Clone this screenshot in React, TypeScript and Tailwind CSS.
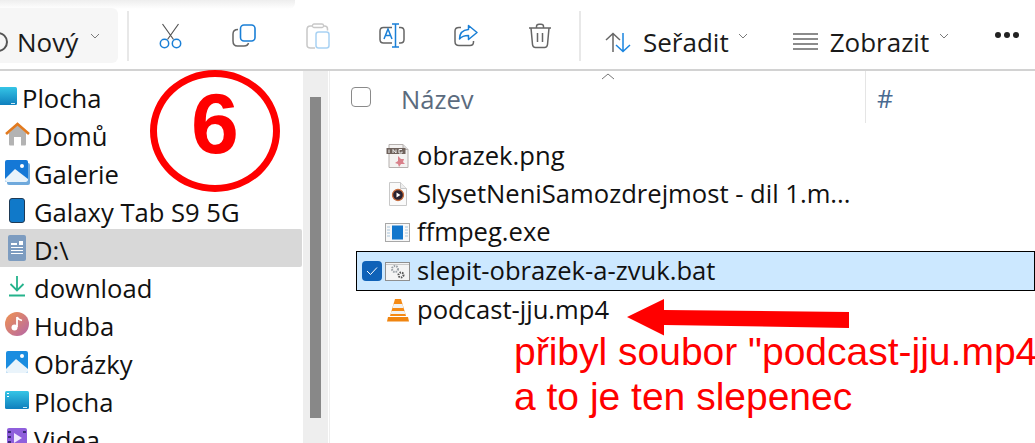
import React from "react";

const ui = { fontFamily: '"Open Sans", "Noto Sans", sans-serif' };

function Chevron({ className = "" }: { className?: string }) {
  return (
    <svg width="10" height="6" viewBox="0 0 10 6" className={className}>
      <path d="M1 1l4 4 4-4" fill="none" stroke="#7a7a7a" strokeWidth="1" />
    </svg>
  );
}

function Scissors() {
  return (
    <svg width="23" height="26" viewBox="0 0 23 26">
      <path d="M3.500 1l11 15.500M19.500 1l-11 15.500" stroke="#555" strokeWidth="1.200" fill="none" />
      <circle cx="5.500" cy="20.500" r="4.200" fill="none" stroke="#1a7fd6" strokeWidth="1.500" />
      <circle cx="17.500" cy="20.500" r="4.200" fill="none" stroke="#1a7fd6" strokeWidth="1.500" />
    </svg>
  );
}
function Copy() {
  return (
    <svg width="24" height="23" viewBox="0 0 24 23">
      <path d="M6 5.500C2.500 5.500 1 7 1 10v7c0 3 1.500 5 4.500 5H12c2.500 0 4-1 4.500-3" fill="none" stroke="#666" strokeWidth="1.500" />
      <rect x="8.500" y="1" width="14.500" height="16" rx="3.500" fill="#fff" stroke="#1a7fd6" strokeWidth="1.600" />
    </svg>
  );
}
function Paste() {
  return (
    <svg width="24" height="26" viewBox="0 0 24 26">
      <path d="M7 3H4.500C2.500 3 1 4.500 1 6.500V22c0 2 1.500 3 3.500 3H9M17 3h1.500c2 0 3 1.500 3 3v1.500" fill="none" stroke="#c8c8c8" strokeWidth="1.500" />
      <rect x="6.500" y="1" width="11" height="3.500" rx="1.500" fill="#fff" stroke="#c8c8c8" strokeWidth="1.300" />
      <rect x="10" y="9" width="13" height="16" rx="2.500" fill="#fff" stroke="#a9d2f3" strokeWidth="1.500" />
    </svg>
  );
}
function Rename() {
  return (
    <svg width="26" height="25" viewBox="0 0 26 25">
      <path d="M13 4.500H4.500C2.500 4.500 1 6 1 8v8.500c0 2 1.500 3.500 3.500 3.500H13M20 4.500h1.500c2 0 3.500 1.500 3.500 3.500v8.500c0 2-1.500 3.500-3.500 3.500H20" fill="none" stroke="#666" strokeWidth="1.500" />
      <path d="M13 1h7M16.500 1v23M13 24h7" fill="none" stroke="#1a7fd6" strokeWidth="1.500" />
      <path d="M5 16l4-10 4 10M6.500 12.500h5" fill="none" stroke="#1a7fd6" strokeWidth="1.500" />
    </svg>
  );
}
function Share() {
  return (
    <svg width="24" height="23" viewBox="0 0 24 23">
      <path d="M7 3.500H5C2.500 3.500 1 5 1 7v10.500c0 2.500 1.500 4 4 4h11c2.500 0 3.500-1.500 3.500-3.500v-1" fill="none" stroke="#666" strokeWidth="1.500" />
      <path d="M14.500 1.500L23 8.500l-8.500 7v-4c-4 0-7 1-9 3.500 0-5.500 3-9 9-9.500z" fill="#fff" stroke="#1a7fd6" strokeWidth="1.500" strokeLinejoin="round" />
    </svg>
  );
}
function Trash() {
  return (
    <svg width="24" height="26" viewBox="0 0 24 26">
      <path d="M1 5h22M8.500 5V3.500C8.500 2 9.500 1.300 11 1.300h2c1.500 0 2.500.7 2.500 2.200V5M3 5l1.500 16.500c.2 2 1.500 3 3 3h9c1.500 0 2.800-1 3-3L21 5M9.500 10v9M14.500 10v9" fill="none" stroke="#666" strokeWidth="1.500" />
    </svg>
  );
}
function Sort() {
  return (
    <svg width="26" height="21" viewBox="0 0 26 21">
      <path d="M8 20V1.500M1 8L8 1.500 15 8" fill="none" stroke="#666" strokeWidth="1.500" />
      <path d="M18 1v18.500M11 13l7 6.500 7-6.500" fill="none" stroke="#1a85e0" strokeWidth="1.500" />
    </svg>
  );
}
function Lines() {
  return (
    <svg width="25" height="17" viewBox="0 0 25 17">
      <path d="M0 1h25M0 6h25M0 11h25M0 16h25" stroke="#666" strokeWidth="1.300" />
    </svg>
  );
}

function SideIcon({ name }: { name: string }) {
  if (name === "home")
    return (
      <svg width="25" height="24" viewBox="0 0 25 24">
        <path d="M4 11v11c0 1 .5 1.500 1.500 1.500H9V15h7v8.500h3.500c1 0 1.500-.5 1.500-1.500V11L12.500 3z" fill="#b3b3b3" />
        <path d="M1 12L12.500 2 24 12" fill="none" stroke="#e27a1f" strokeWidth="2.600" />
      </svg>
    );
  if (name === "gallery")
    return (
      <svg width="25" height="25" viewBox="0 0 25 25">
        <rect x="2" y="3" width="23" height="22" rx="2" fill="#6fa9dc" />
        <rect x="0" y="0" width="23" height="22" rx="2" fill="#1578d6" />
        <path d="M0 19L10 9l13 10v1c0 1-1 2-2 2H2c-1 0-2-1-2-2z" fill="#e8f3fb" />
        <circle cx="17" cy="6" r="2" fill="#fff" />
      </svg>
    );
  if (name === "tablet")
    return (
      <svg width="16" height="25" viewBox="0 0 16 25">
        <rect x="0.500" y="0.500" width="15" height="24" rx="2.500" fill="#1079c9" stroke="#1f3a55" />
      </svg>
    );
  if (name === "drive")
    return (
      <svg width="18" height="26" viewBox="0 0 18 26">
        <rect width="18" height="26" rx="2" fill="#7d9cc0" />
        <path d="M3 8h6v2H3zM11 6h4v4h-4zM3 12h12v1H3zM3 15h12v1H3zM3 18h12v1H3z" fill="#fff" />
      </svg>
    );
  if (name === "download")
    return (
      <svg width="18" height="21" viewBox="0 0 18 21">
        <path d="M9 0v14M2.500 8L9 14.500 15.500 8M1 19.500h16" fill="none" stroke="#25b38c" strokeWidth="1.800" />
      </svg>
    );
  if (name === "music")
    return (
      <svg width="24" height="24" viewBox="0 0 24 24">
        <defs>
          <linearGradient id="mg" x1="0" y1="0" x2="1" y2="1">
            <stop offset="0" stopColor="#f09350" />
            <stop offset="1" stopColor="#b466a8" />
          </linearGradient>
        </defs>
        <circle cx="12" cy="12" r="12" fill="url(#mg)" />
        <path d="M12 5v10M12 5c1 2.500 3 3 5 3.500" fill="none" stroke="#fff" strokeWidth="1.800" />
        <circle cx="9.500" cy="15.500" r="3" fill="#fff" />
      </svg>
    );
  if (name === "pictures")
    return (
      <svg width="22" height="22" viewBox="0 0 22 22">
        <rect width="22" height="22" rx="2" fill="#1b8de0" />
        <path d="M0 18L10 8l12 10v2c0 1-1 2-2 2H2c-1 0-2-1-2-2z" fill="#eaf4fb" />
        <circle cx="16" cy="5" r="2" fill="#fff" />
      </svg>
    );
  if (name === "desktop")
    return (
      <svg width="24" height="18" viewBox="0 0 24 18">
        <defs>
          <linearGradient id="dg" x1="0" y1="0" x2="0" y2="1">
            <stop offset="0" stopColor="#35c5e6" />
            <stop offset="1" stopColor="#0f7fbd" />
          </linearGradient>
        </defs>
        <rect width="24" height="18" rx="1.500" fill="url(#dg)" />
        <path d="M2 2h2v1H2zM2 5h2v1H2z" fill="#fff" />
        <path d="M18 16h4v1h-4z" fill="#cdeaf5" />
      </svg>
    );
  return (
    <svg width="20" height="20" viewBox="0 0 20 20">
      <rect width="20" height="20" rx="2" fill="#8f5fdc" />
      <path d="M7 5l8 5-8 5z" fill="#f0e6ff" />
      <path d="M1 3h3v2H1zM1 8h3v2H1zM1 13h3v2H1zM16 3h3v2h-3z" fill="#3c2a78" />
    </svg>
  );
}

function SideRow({ icon, label, active, scrolled }: { icon: string; label: string; active?: boolean; scrolled?: boolean }) {
  return (
    <div className={`flex items-center h-[38px] w-[302px] rounded-r-[2px] ${active ? "bg-[#d8d8d8]" : ""}`}>
      <div className={`w-[34px] shrink-0 flex items-center justify-center ${scrolled ? "-ml-[12px]" : ""}`}>
        <SideIcon name={icon} />
      </div>
      <span className="mt-[6px] text-[25.6px] leading-none text-[#111]">{label}</span>
    </div>
  );
}

function FileIcon({ name }: { name: string }) {
  if (name === "png")
    return (
      <svg width="24" height="24" viewBox="0 0 24 24">
        <path d="M3 .5h14l5 5v18H3z" fill="#f4f2f1" stroke="#b5b0ae" />
        <path d="M17 .5v5h5" fill="#ddd" stroke="#b5b0ae" />
        <rect x="0.500" y="4" width="19" height="6" fill="#6f625c" />
        <path d="M3 9V5.500M7 9V5.500l3 3.500V5.500M16 5.500h-3v3.500h3V7.500" fill="none" stroke="#eee" strokeWidth="1" />
        <path d="M12 12l3 3 3 0-1 3 2 2-4 0-2 3-1-3-3-1 3-2z" fill="#d9808a" />
      </svg>
    );
  if (name === "video")
    return (
      <svg width="18" height="24" viewBox="0 0 18 24">
        <path d="M.5.500h11l6 6v17H.5z" fill="#fafafa" stroke="#c8c8c8" />
        <path d="M11.500.500v6h6" fill="#eee" stroke="#c8c8c8" />
        <circle cx="9" cy="13" r="5.500" fill="#2a2230" stroke="#c96d3d" strokeWidth="1.300" />
        <path d="M7.500 10.500l4 2.500-4 2.500z" fill="#fff" />
      </svg>
    );
  if (name === "exe")
    return (
      <svg width="25" height="19" viewBox="0 0 25 19">
        <rect x="0.500" y="0.500" width="24" height="18" fill="#f8f8f8" stroke="#a8a8a8" />
        <rect x="7" y="2.500" width="11" height="14" fill="#1276cc" />
        <path d="M2 4h3M2 7h3M2 10h3M2 13h3M20 4h3M20 7h3M20 10h3M20 13h3" stroke="#a8c4da" />
      </svg>
    );
  if (name === "bat")
    return (
      <svg width="25" height="19" viewBox="0 0 25 19">
        <rect x="0.500" y="0.500" width="24" height="18" fill="#f4f4f4" stroke="#8f8f8f" />
        <path d="M1 2.500h23" stroke="#c8c8c8" />
        <circle cx="10" cy="7" r="3" fill="none" stroke="#9aa0a6" strokeWidth="2" strokeDasharray="1.500 1" />
        <circle cx="16" cy="13" r="2.500" fill="none" stroke="#555" strokeWidth="2" strokeDasharray="1.500 1" />
      </svg>
    );
  return (
    <svg width="22" height="24" viewBox="0 0 22 24">
      <path d="M8 1h6l5 17H3z" fill="#f58a14" />
      <path d="M6.600 6h8.800l1 4H5.600zM4.600 13h12.800l1 3H3.600z" fill="#f2f2f2" />
      <path d="M1 19h20l1 4.500H0z" fill="#f08510" />
    </svg>
  );
}

function FileRow({ icon, label, selected }: { icon: string; label: string; selected?: boolean }) {
  return (
    <div
      className={`flex items-center ${
        selected ? "h-[40px] border border-black bg-[#cce8ff]" : "h-[38px] border border-transparent"
      }`}
    >
      <div className="w-[27px] ml-[1px] shrink-0 flex items-center justify-center">
        {selected && (
          <span className="flex items-center justify-center w-[20px] h-[20px] rounded-[4px] bg-[#0f62b8]">
            <svg width="12" height="10" viewBox="0 0 12 10">
              <path d="M1 5l3.500 3.500L11 1.500" fill="none" stroke="#fff" strokeWidth="1" />
            </svg>
          </span>
        )}
      </div>
      <div className="w-[25px] shrink-0 flex items-center justify-center">
        <FileIcon name={icon} />
      </div>
      <span className="ml-[7px] text-[25.6px] leading-none text-[#111] whitespace-nowrap">{label}</span>
    </div>
  );
}

export default function App() {
  return (
    <div className="relative w-[1035px] h-[443px] overflow-hidden bg-white flex flex-col" style={ui}>
      <div className="absolute left-0 top-0 w-[295px] h-[9px] bg-gradient-to-b from-[#eeeeee] to-white rounded-br-[6px]" />

      {/* Toolbar */}
      <div className="relative h-[71px] shrink-0 border-b-2 border-[#d2d2d2] flex items-center">
        <div className="mt-[2px] w-[118px] h-[55px] shrink-0 bg-[#f6f6f6] rounded-r-[6px] flex items-center overflow-hidden">
          <span className="-ml-[12px] mt-[12px] w-[20px] h-[20px] rounded-full border-2 border-[#555] shrink-0" />
          <span className="ml-[9px] mt-[12px] text-[26px] leading-none text-[#1a1a1a]">Nový</span>
          <Chevron className="ml-[12px] shrink-0" />
        </div>
        <div className="ml-[9px] mt-[2px] w-[2px] h-[50px] bg-[#e8e8e8] shrink-0" />
        <div className="mt-[2px] ml-[4px] flex items-center">
          <div className="w-[74px] flex justify-center"><Scissors /></div>
          <div className="w-[74px] flex justify-center"><Copy /></div>
          <div className="w-[74px] flex justify-center"><Paste /></div>
          <div className="w-[74px] flex justify-center"><Rename /></div>
          <div className="w-[74px] flex justify-center"><Share /></div>
          <div className="w-[74px] flex justify-center"><Trash /></div>
        </div>
        <div className="ml-[2px] mt-[2px] w-[2px] h-[50px] bg-[#e8e8e8] shrink-0" />
        <div className="ml-[24px] mt-[15px] shrink-0"><Sort /></div>
        <span className="ml-[12px] mt-[14px] text-[26px] leading-none text-[#1a1a1a]">Seřadit</span>
        <Chevron className="ml-[9px] mt-[2px] shrink-0" />
        <div className="ml-[45px] mt-[14px] shrink-0"><Lines /></div>
        <span className="ml-[12px] mt-[14px] text-[26px] leading-none text-[#1a1a1a]">Zobrazit</span>
        <Chevron className="ml-[10px] mt-[2px] shrink-0" />
        <div className="ml-[46px] mt-[1px] flex gap-[3px] shrink-0">
          <span className="w-[6px] h-[6px] rounded-full bg-[#222]" />
          <span className="w-[6px] h-[6px] rounded-full bg-[#222]" />
          <span className="w-[6px] h-[6px] rounded-full bg-[#222]" />
        </div>
      </div>

      <div className="flex flex-1 min-h-0">
        {/* Sidebar */}
        <div className="relative w-[330px] shrink-0 pt-[6px] flex border-r border-[#eeeeee]">
          <div className="w-[303px] shrink-0">
            <SideRow icon="desktop" label="Plocha" scrolled />
            <SideRow icon="home" label="Domů" />
            <SideRow icon="gallery" label="Galerie" />
            <SideRow icon="tablet" label="Galaxy Tab S9 5G" />
            <SideRow icon="drive" label="D:\" active />
            <SideRow icon="download" label="download" />
            <SideRow icon="music" label="Hudba" />
            <SideRow icon="pictures" label="Obrázky" />
            <SideRow icon="desktop" label="Plocha" />
            <SideRow icon="video" label="Videa" />
          </div>
        </div>

        {/* Main */}
        <div className="relative flex-1 min-w-0">
          <div className="flex items-center h-[52px]">
            <span className="ml-[21px] w-[20px] h-[20px] rounded-[4px] border border-[#8a8a8a]" />
            <span className="ml-[30px] mt-[6px] text-[25.6px] leading-none text-[#5b6b7e] w-[464px]">Název</span>
            <div className="w-px h-full bg-[#e5e5e5]" />
            <span className="ml-[11px] mt-[2px] text-[25px] leading-none text-[#4a6a90]">#</span>
          </div>
          <div className="mt-[14px] ml-[26px]">
            <FileRow icon="png" label="obrazek.png" />
            <FileRow icon="video" label="SlysetNeniSamozdrejmost - dil 1.m..." />
            <FileRow icon="exe" label="ffmpeg.exe" />
            <FileRow icon="bat" label="slepit-obrazek-a-zvuk.bat" selected />
            <FileRow icon="vlc" label="podcast-jju.mp4" />
          </div>
        </div>
      </div>

      {/* Sort caret over column header */}
      <svg width="14" height="8" viewBox="0 0 14 8" className="absolute left-[601px] top-[72px]">
        <path d="M1 7l6-5 6 5" fill="none" stroke="#777" strokeWidth="1" />
      </svg>

      {/* Scrollbar */}
      <div className="absolute left-[303px] top-[71px] bottom-0 w-[25px] bg-[#eeeeee]">
        <div className="absolute left-[7px] top-[26px] w-[11px] h-[321px] bg-[#888888]" />
      </div>

      {/* Red annotations */}
      <div className="absolute left-[150px] top-[70px] w-[130px] h-[122px] rounded-[50%] border-[7px] border-[#ff0000] flex items-center justify-center">
        <span className="text-[86px] leading-none font-bold text-[#ff0000] -mt-[16px]" style={{ fontFamily: '"Liberation Sans", sans-serif' }}>6</span>
      </div>
      <svg width="232" height="44" viewBox="0 0 232 44" className="absolute left-[620px] top-[294px]">
        <path d="M7 23L44 5v11l185 2v16L44 31v10.500z" fill="#ff0000" />
      </svg>
      <div
        className="absolute left-[514px] top-[329px] text-[39px] leading-[45px] text-[#ff0000] whitespace-nowrap"
        style={{ fontFamily: '"Liberation Sans", sans-serif' }}
      >
        <div>přibyl soubor "podcast-jju.mp4</div>
        <div>a to je ten slepenec</div>
      </div>
    </div>
  );
}
